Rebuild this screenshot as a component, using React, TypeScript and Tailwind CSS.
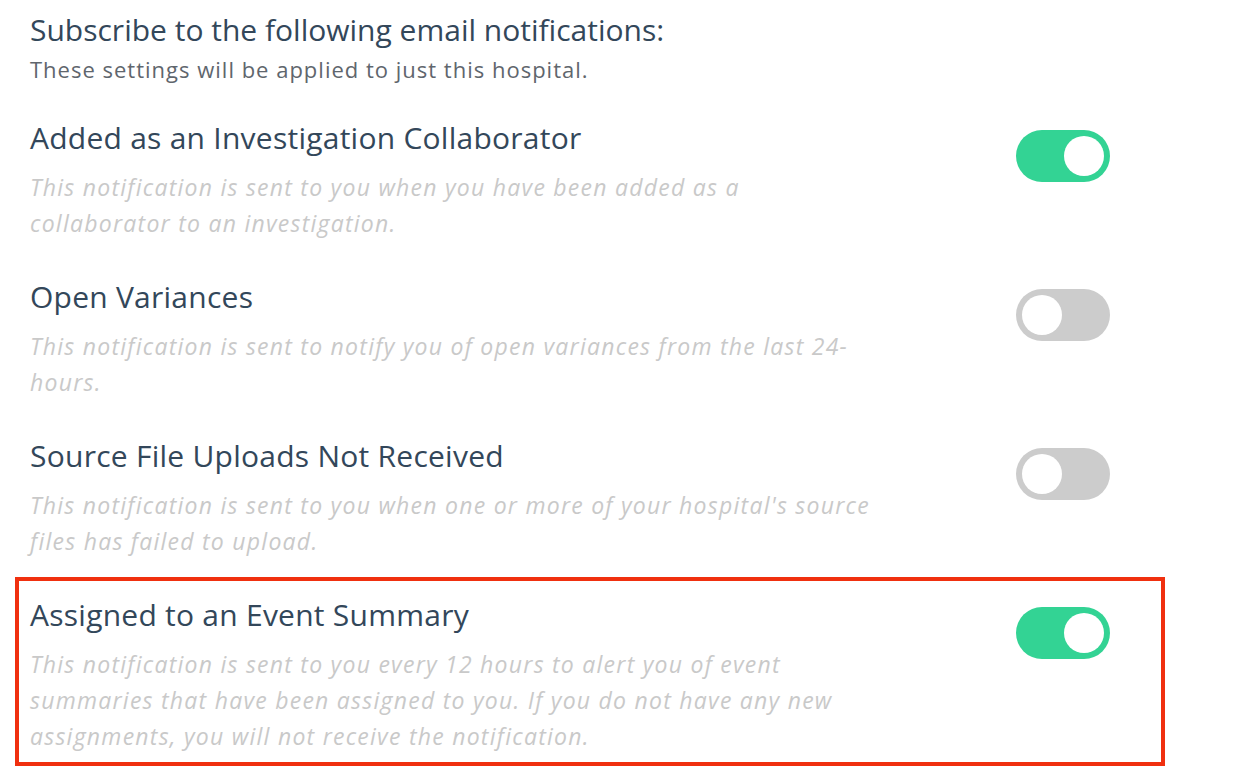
import { useState } from 'react';

type Item = {
  title: string;
  desc: string;
  on: boolean;
  highlight?: boolean;
};

const items: Item[] = [
  {
    title: 'Added as an Investigation Collaborator',
    desc: 'This notification is sent to you when you have been added as a collaborator to an investigation.',
    on: true,
  },
  {
    title: 'Open Variances',
    desc: 'This notification is sent to notify you of open variances from the last 24-hours.',
    on: false,
  },
  {
    title: 'Source File Uploads Not Received',
    desc: "This notification is sent to you when one or more of your hospital's source files has failed to upload.",
    on: false,
  },
  {
    title: 'Assigned to an Event Summary',
    desc: 'This notification is sent to you every 12 hours to alert you of event summaries that have been assigned to you. If you do not have any new assignments, you will not receive the notification.',
    on: true,
    highlight: true,
  },
];

function Toggle({ on, onClick }: { on: boolean; onClick: () => void }) {
  return (
    <button
      onClick={onClick}
      className={`mt-[10px] flex h-[52px] w-[94px] shrink-0 items-center rounded-full p-[6px] ${
        on ? 'justify-end bg-[#33d394]' : 'justify-start bg-[#cccccc]'
      }`}
    >
      <span className="block h-[40px] w-[40px] rounded-full bg-white" />
    </button>
  );
}

export default function App() {
  const [state, setState] = useState(items.map((i) => i.on));

  return (
    <main className="min-h-screen bg-white pl-[15px] pt-[12px] font-['Open_Sans',sans-serif]">
      <div className="pl-[15px]">
        <h1 className="text-[30px] leading-[36px] text-[#33475a]">
          Subscribe to the following email notifications:
        </h1>
        <p className="mt-[6px] text-[22px] leading-[30px] tracking-[1px] text-[#5f666d]">
          These settings will be applied to just this hospital.
        </p>
      </div>

      <div className="mt-[16px] flex w-[1150px] flex-col gap-[6px]">
        {items.map((item, i) => (
          <div
            key={item.title}
            className={`flex border-4 pl-[11px] pr-[51px] pt-[16px] pb-[8px] ${
              item.highlight ? 'border-[#f0300f]' : 'border-transparent'
            }`}
          >
            <div className="w-[848px]">
              <h2 className="whitespace-nowrap text-[30px] leading-[36px] tracking-[0.25px] text-[#33475a]">
                {item.title}
              </h2>
              <p className="mt-[13px] text-[23px] italic leading-[36px] tracking-[1.25px] text-[#c9c9c9]">
                {item.desc}
              </p>
            </div>
            <div className="ml-auto">
              <Toggle
                on={state[i]}
                onClick={() => setState((s) => s.map((v, j) => (j === i ? !v : v)))}
              />
            </div>
          </div>
        ))}
      </div>
    </main>
  );
}
